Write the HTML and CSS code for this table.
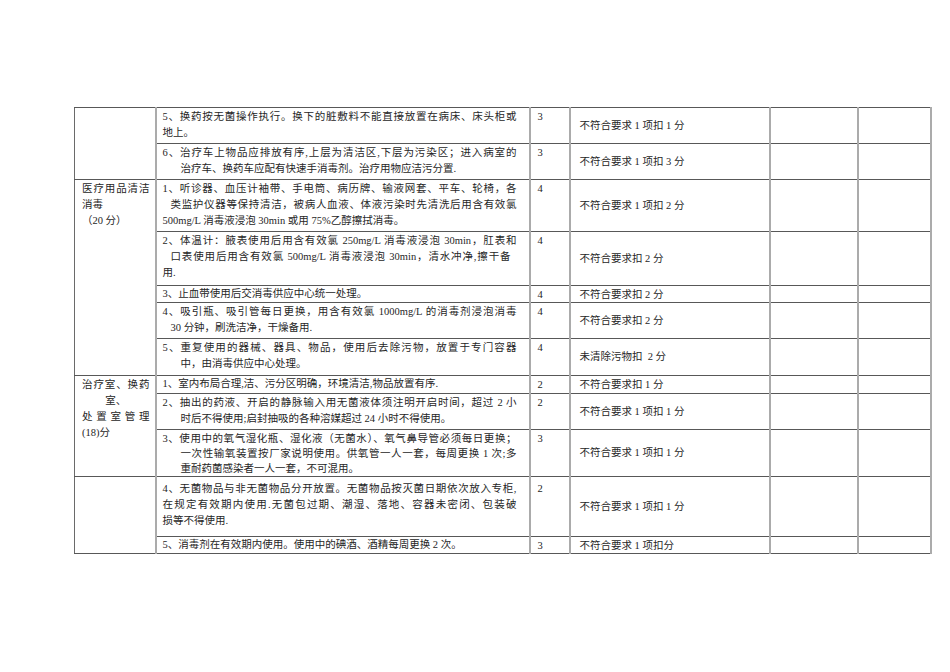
FILE: index.html
```html
<!DOCTYPE html>
<html lang="zh-CN">
<head>
<meta charset="utf-8">
<title>消毒隔离检查表</title>
<link rel="stylesheet" href="styles.css">
</head>
<body>
<table class="sheet">
  <colgroup>
    <col class="c-cat"><col class="c-item"><col class="c-score"><col class="c-rule"><col class="c-x1"><col class="c-x2">
  </colgroup>
  <tbody>
    <tr class="h36">
      <td class="cat" rowspan="2"></td>
      <td class="item"><div class="full">5、换药按无菌操作执行。换下的脏敷料不能直接放置在病床、床头柜或</div><div>地上。</div></td>
      <td class="score"><div>3</div></td>
      <td class="rule"><div>不符合要求 1 项扣 1 分</div></td>
      <td></td><td></td>
    </tr>
    <tr class="h36">
      <td class="item"><div class="full">6、治疗车上物品应排放有序,上层为清洁区,下层为污染区；进入病室的</div><div class="i2">治疗车、换药车应配有快速手消毒剂。治疗用物应洁污分置.</div></td>
      <td class="score"><div>3</div></td>
      <td class="rule"><div>不符合要求 1 项扣 3 分</div></td>
      <td></td><td></td>
    </tr>
    <tr class="h53">
      <td class="cat" rowspan="5"><div class="full">医疗用品清洁</div><div>消毒</div><div>（20 分）</div></td>
      <td class="item"><div class="full">1、听诊器、血压计袖带、手电筒、病历牌、输液网套、平车、轮椅，各</div><div class="full i1">类监护仪器等保持清洁，被病人血液、体液污染时先清洗后用含有效氯</div><div>500mg/L 消毒液浸泡 30min 或用 75%乙醇擦拭消毒。</div></td>
      <td class="score"><div>4</div></td>
      <td class="rule"><div>不符合要求 1 项扣 2 分</div></td>
      <td></td><td></td>
    </tr>
    <tr class="h55">
      <td class="item"><div class="full">2、体温计：腋表使用后用含有效氯 250mg/L 消毒液浸泡 30min，肛表和</div><div class="full i1 r1">口表使用后用含有效氯 500mg/L 消毒液浸泡 30min，清水冲净,擦干备</div><div>用.</div></td>
      <td class="score"><div>4</div></td>
      <td class="rule"><div>不符合要求扣 2 分</div></td>
      <td></td><td></td>
    </tr>
    <tr class="h16">
      <td class="item"><div>3、止血带使用后交消毒供应中心统一处理。</div></td>
      <td class="score"><div>4</div></td>
      <td class="rule"><div>不符合要求扣 2 分</div></td>
      <td></td><td></td>
    </tr>
    <tr class="h36">
      <td class="item"><div class="full">4、吸引瓶、吸引管每日更换，用含有效氯 1000mg/L 的消毒剂浸泡消毒</div><div class="i1">30 分钟，刷洗洁净，干燥备用.</div></td>
      <td class="score"><div>4</div></td>
      <td class="rule"><div>不符合要求扣 2 分</div></td>
      <td></td><td></td>
    </tr>
    <tr class="h37">
      <td class="item"><div class="full">5、重复使用的器械、器具、物品，使用后去除污物，放置于专门容器</div><div class="i2">中，由消毒供应中心处理。</div></td>
      <td class="score"><div>4</div></td>
      <td class="rule"><div>未清除污物扣&nbsp; 2 分</div></td>
      <td></td><td></td>
    </tr>
    <tr class="h17">
      <td class="cat" rowspan="3"><div class="full">治疗室、换药</div><div class="center">室、</div><div class="full">处置室管理</div><div>(18)分</div></td>
      <td class="item"><div>1、室内布局合理,洁、污分区明确，环境清洁,物品放置有序.</div></td>
      <td class="score"><div>2</div></td>
      <td class="rule"><div>不符合要求扣 1 分</div></td>
      <td></td><td></td>
    </tr>
    <tr class="h36">
      <td class="item"><div class="full">2、抽出的药液、开启的静脉输入用无菌液体须注明开启时间，超过 2 小</div><div class="i2">时后不得使用;启封抽吸的各种溶媒超过 24 小时不得使用。</div></td>
      <td class="score"><div>2</div></td>
      <td class="rule"><div>不符合要求 1 项扣 1 分</div></td>
      <td></td><td></td>
    </tr>
    <tr class="h47">
      <td class="item tight"><div class="full">3、使用中的氧气湿化瓶、湿化液（无菌水）、氧气鼻导管必须每日更换；</div><div class="full i2">一次性输氧装置按厂家说明使用。供氧管一人一套，每周更换 1 次;多</div><div class="i2">重耐药菌感染者一人一套，不可混用。</div></td>
      <td class="score"><div>3</div></td>
      <td class="rule"><div>不符合要求 1 项扣 1 分</div></td>
      <td></td><td></td>
    </tr>
    <tr class="h61">
      <td class="cat" rowspan="2"></td>
      <td class="item pt4"><div class="full">4、无菌物品与非无菌物品分开放置。无菌物品按灭菌日期依次放入专柜,</div><div class="full">在规定有效期内使用.无菌包过期、潮湿、落地、容器未密闭、包装破</div><div>损等不得使用.</div></td>
      <td class="score pt4"><div>2</div></td>
      <td class="rule"><div>不符合要求 1 项扣 1 分</div></td>
      <td></td><td></td>
    </tr>
    <tr class="h16">
      <td class="item"><div>5、消毒剂在有效期内使用。使用中的碘酒、酒精每周更换 2 次。</div></td>
      <td class="score"><div>3</div></td>
      <td class="rule"><div>不符合要求 1 项扣分</div></td>
      <td></td><td></td>
    </tr>
  </tbody>
</table>
</body>
</html>
```

FILE: styles.css
```css
html, body {
  margin: 0;
  padding: 0;
  background: #ffffff;
}

body {
  font-family: "Liberation Serif", "Noto Sans CJK SC", serif;
  font-size: 10.5px;
  line-height: 16px;
  color: #262626;
}

.sheet {
  margin: 107px 0 0 74px;
  border-collapse: collapse;
  table-layout: fixed;
  width: 856px;
}

.c-cat { width: 81px; }
.c-item { width: 374px; }
.c-score { width: 40px; }
.c-rule { width: 200px; }
.c-x1 { width: 88px; }
.c-x2 { width: 73px; }

.sheet td {
  border-top: 1px solid #585858;
  border-bottom: 1px solid #585858;
  border-left: 2px solid #ababab;
  border-right: 2px solid #ababab;
  padding: 0;
  vertical-align: top;
  white-space: nowrap;
  overflow: hidden;
}

.sheet td:first-child {
  border-left: 1px solid #6a6a6a;
}

.sheet td div {
  height: 16px;
  overflow: visible;
}

.h16 { height: 15px; }
.h17 { height: 16px; }
.h36 { height: 36px; }
.h37 { height: 37px; }
.h47 { height: 46px; }
.h53 { height: 52px; }
.h55 { height: 54px; }
.h61 { height: 60px; }

.sheet td.cat {
  padding: 1px 5px 0 7px;
}

.sheet td.item {
  padding: 1px 12px 0 6px;
}

.h16 td.item, .h16 td.score,
.h17 td.item, .h17 td.score {
  padding-top: 0;
}

.h16 td div {
  height: 15px;
  line-height: 15px;
}

.h17 td.item div, .h17 td.score div, .h17 td.rule div {
  height: 16px;
}

.sheet td.tight div {
  height: 15px;
}

.sheet td.score {
  padding: 1px 0 0 7px;
}

.sheet td.rule {
  padding: 0 0 0 9px;
  vertical-align: middle;
}

.sheet td.pt4 {
  padding-top: 4px;
}

.full {
  text-align: justify;
  text-align-last: justify;
}

.center {
  text-align: center;
}

.i1 { padding-left: 8px; }
.i2 { padding-left: 18px; }
.r1 { padding-right: 6px; }
```
